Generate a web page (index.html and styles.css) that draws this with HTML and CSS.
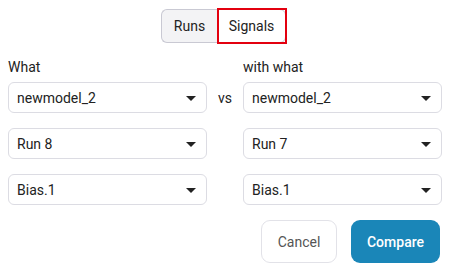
FILE: index.html
```html
<!DOCTYPE html>
<html>
<head>
<meta charset="utf-8">
<link rel="stylesheet" href="styles.css">
</head>
<body>
<div class="page">
  <div class="toggle-row">
    <div class="toggle">
      <button class="seg seg-left">Runs</button>
      <button class="seg seg-right active">Signals</button>
    </div>
  </div>
  <div class="grid">
    <div class="label">What</div>
    <div></div>
    <div class="label">with what</div>

    <div class="select"><span>newmodel_2</span><i class="caret"></i></div>
    <div class="vs">vs</div>
    <div class="select"><span>newmodel_2</span><i class="caret"></i></div>

    <div class="select"><span>Run 8</span><i class="caret"></i></div>
    <div></div>
    <div class="select"><span>Run 7</span><i class="caret"></i></div>

    <div class="select"><span>Bias.1</span><i class="caret"></i></div>
    <div></div>
    <div class="select"><span>Bias.1</span><i class="caret"></i></div>
  </div>
  <div class="actions">
    <button class="btn btn-cancel">Cancel</button>
    <button class="btn btn-primary">Compare</button>
  </div>
</div>
</body>
</html>
```

FILE: styles.css
```css
* { box-sizing: border-box; }
html, body { margin: 0; padding: 0; background: #fff; }
body { font-family: Roboto, "Liberation Sans", sans-serif; font-size: 14px; color: #222; }
.page { padding: 9px 8px 0 8px; width: 449px; }
.toggle-row { display: flex; justify-content: center; padding-right: 2px; }
.toggle { display: flex; }
.seg {
  font: inherit; font-size: 14px; color: #222; height: 34px; margin: 0;
  border: 1px solid #c9c9d3; background: #f3f3f5; cursor: pointer; padding: 0;
}
.seg-left { width: 56px; border-radius: 6px 0 0 6px; border-right: none; }
.seg-right { width: 69px; border-radius: 0 6px 6px 0; background: #fff; position: relative; }
.seg-right.active::after {
  content: ""; position: absolute; left: -1px; top: -2px; right: -2px; bottom: -2px;
  border: 2px solid #e3000f;
}
.grid {
  display: grid; grid-template-columns: 199px 36px 199px;
  row-gap: 15px; margin-top: 16px;
}
.label { line-height: 16px; color: #222; margin-bottom: -8px; }
.select {
  height: 31px; border: 1px solid #dcdce3; border-radius: 6px;
  display: flex; align-items: center; justify-content: space-between;
  padding: 0 10px 0 8px; color: #222;
}
.caret {
  width: 0; height: 0; border-left: 5px solid transparent; border-right: 5px solid transparent;
  border-top: 5px solid #222; margin-top: 1px;
}
.vs { display: flex; align-items: center; justify-content: center; color: #222; }
.actions { display: flex; justify-content: flex-end; gap: 14px; margin-top: 15px; padding-right: 1px; }
.btn { font: inherit; font-size: 14px; height: 43px; border-radius: 9px; cursor: pointer; padding: 0; }
.btn-cancel { width: 76px; background: #fff; border: 1px solid #e2e2e8; color: #555; }
.btn-primary { width: 89px; background: #1a86b8; border: none; color: #fff; font-weight: 500; }
```
